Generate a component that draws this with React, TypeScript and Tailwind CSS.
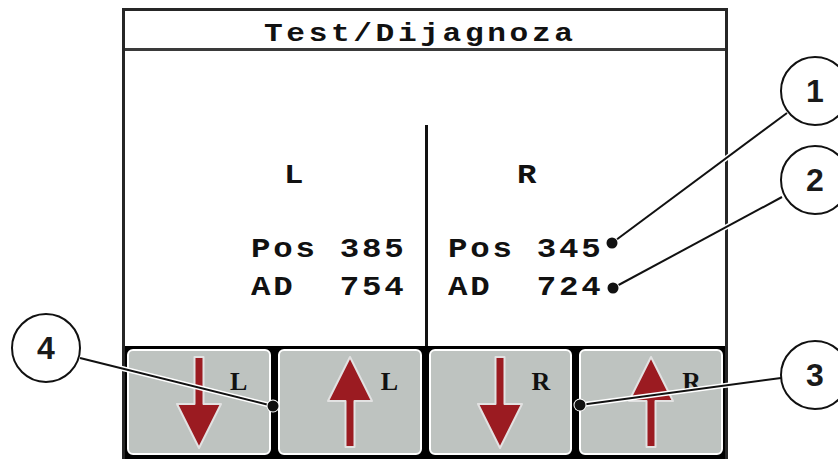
import React from "react";

const mono = { fontFamily: '"Liberation Mono", "DejaVu Sans Mono", monospace' };

function Arrow({ up }: { up: boolean }) {
  const d = up
    ? "M24 8 L46 52 H28.5 V98 H19.5 V52 H2 Z"
    : "M19.5 8 H28.5 V55 H46 L24 99 L2 55 H19.5 Z";
  return (
    <svg width="48" height="106" viewBox="0 0 48 106" className="block">
      <path d={d} fill="#9b1b21" stroke="#e2e2e2" strokeWidth="2" strokeLinejoin="round" />
    </svg>
  );
}

function Btn({ up, label }: { up: boolean; label: string }) {
  return (
    <div className="relative flex-1 h-[106px] bg-[#bec3c0] border-2 border-white rounded-[6px] flex justify-center">
      <div className="-mt-[2px]">
        <Arrow up={up} />
      </div>
      <span
        className="absolute top-[18px] left-[101px] text-[26px] leading-none font-bold text-[#111]"
        style={{ fontFamily: '"Liberation Serif", "DejaVu Serif", serif' }}
      >
        {label}
      </span>
    </div>
  );
}

function Callouts() {
  const circles = [
    { cx: 815, cy: 91, n: "1" },
    { cx: 815, cy: 180, n: "2" },
    { cx: 815, cy: 375, n: "3" },
    { cx: 46, cy: 348, n: "4" },
  ];
  const lines = [
    [787, 113, 612, 243],
    [782, 197, 613, 288],
    [781, 378, 580, 405],
    [80, 358, 273, 406],
  ];
  return (
    <svg className="absolute inset-0 pointer-events-none" width="838" height="459" viewBox="0 0 838 459">
      {lines.map(([x1, y1, x2, y2], i) => (
        <g key={i}>
          <line x1={x1} y1={y1} x2={x2} y2={y2} stroke="#fff" strokeWidth="5" strokeLinecap="round" />
          <line x1={x1} y1={y1} x2={x2} y2={y2} stroke="#111" strokeWidth="2" />
          <circle cx={x2} cy={y2} r="6.5" fill="#fff" />
          <circle cx={x2} cy={y2} r="5.5" fill="#111" />
        </g>
      ))}
      {circles.map((c) => (
        <g key={c.n}>
          <circle cx={c.cx} cy={c.cy} r="34" fill="#fff" stroke="#111" strokeWidth="2" />
          <text
            x={c.cx}
            y={c.cy + 11}
            textAnchor="middle"
            fontSize="32"
            fontWeight="700"
            fill="#1a1a1a"
            fontFamily='"Liberation Sans", Arial, sans-serif'
          >
            {c.n}
          </text>
        </g>
      ))}
    </svg>
  );
}

function Row({ text, className }: { text: string; className: string }) {
  return (
    <div className={className}>
      <span className="inline-block origin-left scale-x-[1.2]">{text}</span>
    </div>
  );
}

export default function App() {
  return (
    <div className="relative w-[838px] h-[459px] bg-white overflow-hidden">
      <div className="ml-[122px] mt-[8px] w-[606px] h-[451px] border-[3px] border-b-0 border-[#262626] flex flex-col">
        {/* Title */}
        <div
          className="h-[37px] pt-[9px] leading-[28px] text-[26px] font-bold tracking-[3px] text-[#111] pl-[139px] whitespace-pre"
          style={mono}
        >
          <span className="inline-block origin-left scale-x-[1.2]">Test/Dijagnoza</span>
        </div>
        <div className="h-[3px] bg-[#3a3a3a]" />
        {/* Content */}
        <div className="h-[295px] flex text-[#111] text-[27px] leading-[38px] tracking-[2.3px] whitespace-pre font-bold" style={mono}>
          <div className="w-[300px] pt-[106px] flex flex-col">
            <Row className="ml-[159px]" text="L" />
            <Row className="ml-[126px] mt-[36px]" text="Pos 385" />
            <Row className="ml-[126px]" text="AD  754" />
          </div>
          <div className="w-[3px] mt-[74px] bg-[#111]" />
          <div className="flex-1 pt-[106px] flex flex-col">
            <Row className="ml-[89px]" text="R" />
            <Row className="ml-[20px] mt-[36px]" text="Pos 345" />
            <Row className="ml-[20px]" text="AD  724" />
          </div>
        </div>
        {/* Button bar */}
        <div className="flex-1 bg-black pt-[3px] px-[2px] flex gap-[7px]">
          <Btn up={false} label="L" />
          <Btn up={true} label="L" />
          <Btn up={false} label="R" />
          <Btn up={true} label="R" />
        </div>
      </div>
      <Callouts />
    </div>
  );
}
